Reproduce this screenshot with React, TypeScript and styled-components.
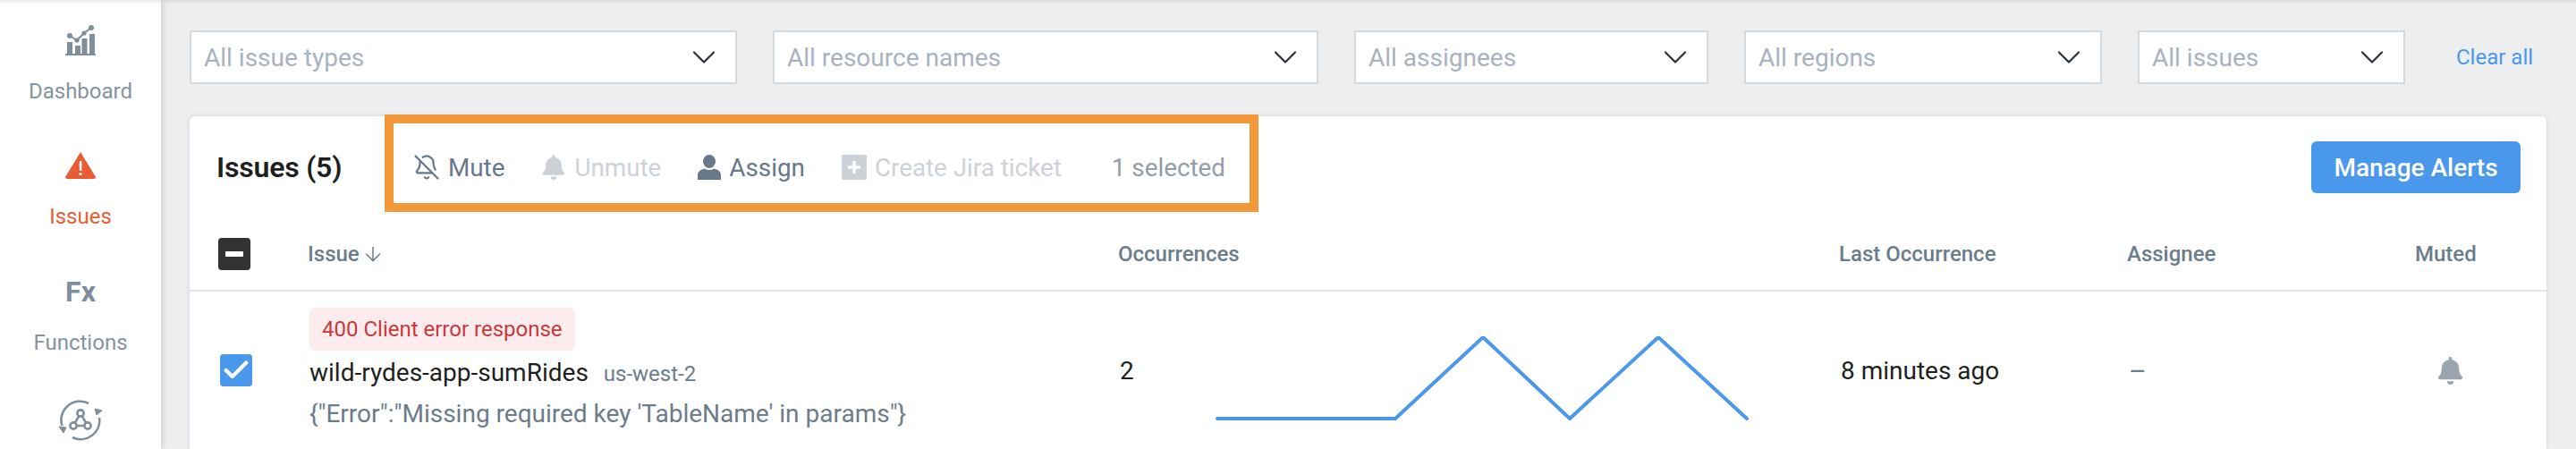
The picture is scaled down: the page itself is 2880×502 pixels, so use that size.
import React from 'react'
import styled, { createGlobalStyle } from 'styled-components'
import { FaBell } from 'react-icons/fa'
import { BellOff, ChevronDown, ArrowDown, Check } from 'lucide-react'

const GlobalStyle = createGlobalStyle`
    html, body {
        margin: 0;
        padding: 0;
        width: 2880px;
        height: 502px;
        overflow: hidden;
        background: #eceef0;
        font-family: Roboto, "Liberation Sans", sans-serif;
    }
    * { box-sizing: border-box; }
`

const Shell = styled.div`
    position: relative;
    display: flex;
    width: 2880px;
    height: 502px;
    overflow: hidden;
`

const TopShadow = styled.div`
    position: absolute;
    left: 0;
    top: 0;
    width: 100%;
    height: 5px;
    background: linear-gradient(rgba(60, 70, 85, 0.1), rgba(60, 70, 85, 0));
    pointer-events: none;
`

const Sidebar = styled.nav`
    width: 180px;
    height: 502px;
    flex-shrink: 0;
    background: #fff;
    box-shadow: 2px 0 6px rgba(60, 70, 85, 0.18);
    display: flex;
    flex-direction: column;
    align-items: center;
`

const NavItem = styled.div<{ $top: number; $gap: number }>`
    padding-top: ${(p) => p.$top}px;
    display: flex;
    flex-direction: column;
    align-items: center;
    gap: ${(p) => p.$gap}px;
`

const NavLabel = styled.span<{ $active?: boolean }>`
    font-size: 24px;
    line-height: 28px;
    color: ${(p) => (p.$active ? '#e85c33' : '#8593a0')};
`

const FxGlyph = styled.span`
    font-size: 32px;
    line-height: 24px;
    font-weight: 700;
    color: #7f8e9b;
`

const Main = styled.main`
    flex: 1;
    padding: 34px 33px 0 32px;
`

const FilterRow = styled.div`
    display: flex;
    align-items: center;
    gap: 40px;
    height: 60px;
    margin-bottom: 36px;
`

const Filter = styled.div<{ $width: number }>`
    width: ${(p) => p.$width}px;
    height: 60px;
    display: flex;
    align-items: center;
    justify-content: space-between;
    padding: 0 13px 0 14px;
    background: #fff;
    border: 2px solid #d3dadf;
    font-size: 28px;
    color: #a8b2c1;
`

const ClearAll = styled.a`
    margin-left: 17px;
    font-size: 24px;
    color: #4a98ec;
`

const Card = styled.section`
    position: relative;
    background: #fff;
    border-radius: 6px 6px 0 0;
    height: 372px;
    box-shadow: 0 0 5px rgba(60, 70, 85, 0.16);
`

const CardHeader = styled.header`
    display: flex;
    align-items: center;
    height: 114px;
    padding: 0 29px 0 30px;
`

const Title = styled.h2`
    margin: 0;
    width: 220px;
    font-size: 32px;
    font-weight: 600;
    letter-spacing: -0.2px;
    color: #1d1f21;
`

const Actions = styled.div`
    display: flex;
    align-items: center;
    gap: 41px;
    font-size: 27.8px;
    flex: 1;
`

const Action = styled.span<{ $disabled?: boolean }>`
    display: flex;
    align-items: center;
    gap: 9px;
    color: ${(p) => (p.$disabled ? '#cdd2d8' : '#66788a')};
`

const Selected = styled.span`
    margin-left: 15px;
    color: #929da8;
`

const Highlight = styled.div`
    position: absolute;
    left: 218px;
    top: -2px;
    width: 977px;
    height: 109px;
    border: 10px solid #f39939;
    pointer-events: none;
`

const PrimaryButton = styled.button`
    width: 234px;
    height: 58px;
    border: 0;
    border-radius: 6px;
    background: #4a98ec;
    color: #fff;
    font: 500 28px Roboto, sans-serif;
    padding: 0;
`

const HeadRow = styled.div`
    display: grid;
    grid-template-columns: 132px 906px 806px 322px 322px 1fr;
    align-items: center;
    height: 82px;
    border-bottom: 2px solid #e2e4e6;
    font-size: 24px;
    font-weight: 500;
    color: #6b7c8b;
`

const HeadCell = styled.span`
    display: flex;
    align-items: center;
    gap: 2px;
`

const Row = styled.div`
    display: grid;
    grid-template-columns: 134px 904px 806px 322px 322px 1fr;
    align-items: center;
    height: 176px;
    font-size: 28px;
    color: #1d1f21;
`

const Box = styled.span<{ $checked?: boolean }>`
    width: 36px;
    height: 36px;
    margin-left: ${(p) => (p.$checked ? 34 : 32)}px;
    border-radius: 4px;
    display: flex;
    align-items: center;
    justify-content: center;
    background: ${(p) => (p.$checked ? '#4a98ec' : '#333')};
    color: #fff;
`

const Minus = styled.span`
    width: 20px;
    height: 6px;
    background: #fff;
    border-radius: 1px;
`

const IssueCell = styled.div`
    display: flex;
    flex-direction: column;
    align-items: flex-start;
`

const Tag = styled.span`
    height: 48px;
    padding: 0 14px;
    display: flex;
    align-items: center;
    font-size: 24px;
    border-radius: 6px;
    background: #fdecee;
    color: #c8393b;
`

const Name = styled.div`
    height: 50px;
    line-height: 50px;
`

const Region = styled.span`
    margin-left: 17px;
    font-size: 24px;
    color: #6b7c8b;
`

const ErrorText = styled.div`
    height: 42px;
    line-height: 42px;
    color: #6b7c8b;
`

const OccurrenceCell = styled.div`
    display: flex;
    align-items: center;
    padding-left: 2px;
`

const Spark = styled.svg`
    flex-shrink: 0;
    margin: 24px 0 0 91px;
`

const LastSeen = styled.div`
    padding-left: 2px;
`

const Dash = styled.span`
    padding-left: 2px;
    font-size: 30px;
    color: #6b7c8b;
`

const MutedBell = styled.span`
    padding-left: 24px;
    display: flex;
    color: #9aa5ae;
`

const DashboardIcon = () => (
    <svg width="34" height="34" viewBox="0 0 34 34" fill="#7f8e9b">
        <rect x="2" y="19" width="6" height="13" />
        <rect x="11" y="23" width="6" height="9" />
        <rect x="18.5" y="15" width="6" height="17" />
        <rect x="27" y="10" width="6" height="22" />
        <rect x="0" y="32" width="34" height="2" />
        <path d="M5 12 L13 17 L21 9 L29 3" stroke="#7f8e9b" strokeWidth="2" fill="none" />
        <circle cx="5" cy="12" r="3" />
        <circle cx="13" cy="17" r="2.6" />
        <circle cx="21" cy="9" r="2.6" />
        <circle cx="29" cy="3" r="3" />
    </svg>
)

const WarningIcon = () => (
    <svg width="34" height="30" viewBox="0 0 34 30">
        <path d="M17 0 L34 28 Q34 30 32 30 L2 30 Q0 30 0 28 Z" fill="#e85c33" />
        <rect x="15.8" y="10" width="2.6" height="11" rx="1" fill="#fff" />
        <circle cx="17" cy="24.5" r="1.6" fill="#fff" />
    </svg>
)

const SyncIcon = () => (
    <svg width="48" height="46" viewBox="0 0 48 46" fill="none" stroke="#7f8e9b" strokeWidth="2.6">
        <path d="M33 4 A21 21 0 0 0 3.4 29" />
        <path d="M15 42 A21 21 0 0 0 45 20" />
        <path d="M0 30 L8 31 L5 37 Z" fill="#7f8e9b" strokeWidth="1" />
        <path d="M40 10 L48 12 L42 17 Z" fill="#7f8e9b" strokeWidth="1" />
        <path d="M24 15 L16 29 L32 29 Z" />
        <circle cx="24" cy="15" r="3.6" fill="#fff" />
        <circle cx="16" cy="29" r="3.6" fill="#fff" />
        <circle cx="32" cy="29" r="3.6" fill="#fff" />
    </svg>
)

const PersonIcon = () => (
    <svg width="26" height="28" viewBox="0 0 26 28" fill="currentColor">
        <ellipse cx="13" cy="7.5" rx="7" ry="7.5" />
        <path d="M0 28 L0 23 C0 18 4 16.5 8 15.5 C10 17.5 16 17.5 18 15.5 C22 16.5 26 18 26 23 L26 28 Z" />
    </svg>
)

const PlusSquareIcon = () => (
    <svg width="28" height="28" viewBox="0 0 28 28">
        <rect width="28" height="28" rx="1.5" fill="currentColor" />
        <path d="M14 7 V21 M7 14 H21" stroke="#fff" strokeWidth="3.4" />
    </svg>
)

const Filters = [
    { label: 'All issue types', width: 612 },
    { label: 'All resource names', width: 610 },
    { label: 'All assignees', width: 396 },
    { label: 'All regions', width: 400 },
    { label: 'All issues', width: 299 },
]

const App: React.FC = () => {
    return (
        <>
            <GlobalStyle />
            <Shell>
                <Sidebar>
                    <NavItem $top={28} $gap={26}>
                        <DashboardIcon />
                        <NavLabel>Dashboard</NavLabel>
                    </NavItem>
                    <NavItem $top={54} $gap={28}>
                        <WarningIcon />
                        <NavLabel $active>Issues</NavLabel>
                    </NavItem>
                    <NavItem $top={58} $gap={31}>
                        <FxGlyph>Fx</FxGlyph>
                        <NavLabel>Functions</NavLabel>
                    </NavItem>
                    <NavItem $top={50} $gap={0}>
                        <SyncIcon />
                    </NavItem>
                </Sidebar>
                <Main>
                    <FilterRow>
                        {Filters.map((f) => (
                            <Filter key={f.label} $width={f.width}>
                                {f.label}
                                <ChevronDown size={44} color="#2b3138" strokeWidth={1.2} />
                            </Filter>
                        ))}
                        <ClearAll>Clear all</ClearAll>
                    </FilterRow>
                    <Card>
                        <CardHeader>
                            <Title>Issues (5)</Title>
                            <Actions>
                                <Action>
                                    <BellOff size={30} strokeWidth={1.8} />
                                    Mute
                                </Action>
                                <Action $disabled>
                                    <FaBell size={28} />
                                    Unmute
                                </Action>
                                <Action>
                                    <PersonIcon />
                                    Assign
                                </Action>
                                <Action $disabled>
                                    <PlusSquareIcon />
                                    Create Jira ticket
                                </Action>
                                <Selected>1 selected</Selected>
                            </Actions>
                            <PrimaryButton>Manage Alerts</PrimaryButton>
                        </CardHeader>
                        <Highlight />
                        <HeadRow>
                            <Box>
                                <Minus />
                            </Box>
                            <HeadCell>
                                Issue <ArrowDown size={26} strokeWidth={1.4} />
                            </HeadCell>
                            <HeadCell>Occurrences</HeadCell>
                            <HeadCell>Last Occurrence</HeadCell>
                            <HeadCell>Assignee</HeadCell>
                            <HeadCell>Muted</HeadCell>
                        </HeadRow>
                        <Row>
                            <Box $checked>
                                <Check size={34} strokeWidth={3} />
                            </Box>
                            <IssueCell>
                                <Tag>400 Client error response</Tag>
                                <Name>
                                    wild-rydes-app-sumRides<Region>us-west-2</Region>
                                </Name>
                                <ErrorText>{`{"Error":"Missing required key 'TableName' in params"}`}</ErrorText>
                            </IssueCell>
                            <OccurrenceCell>
                                2
                                <Spark width="596" height="100" viewBox="0 0 596 100" fill="none">
                                    <path
                                        d="M2 92 L201 92 L299 1 L396 92 L495 1 L594 92"
                                        stroke="#4a98ec"
                                        strokeWidth="4"
                                        strokeLinejoin="round"
                                        strokeLinecap="round"
                                    />
                                </Spark>
                            </OccurrenceCell>
                            <LastSeen>8 minutes ago</LastSeen>
                            <Dash>–</Dash>
                            <MutedBell>
                                <FaBell size={31} />
                            </MutedBell>
                        </Row>
                    </Card>
                </Main>
                <TopShadow />
            </Shell>
        </>
    )
}

export default App
